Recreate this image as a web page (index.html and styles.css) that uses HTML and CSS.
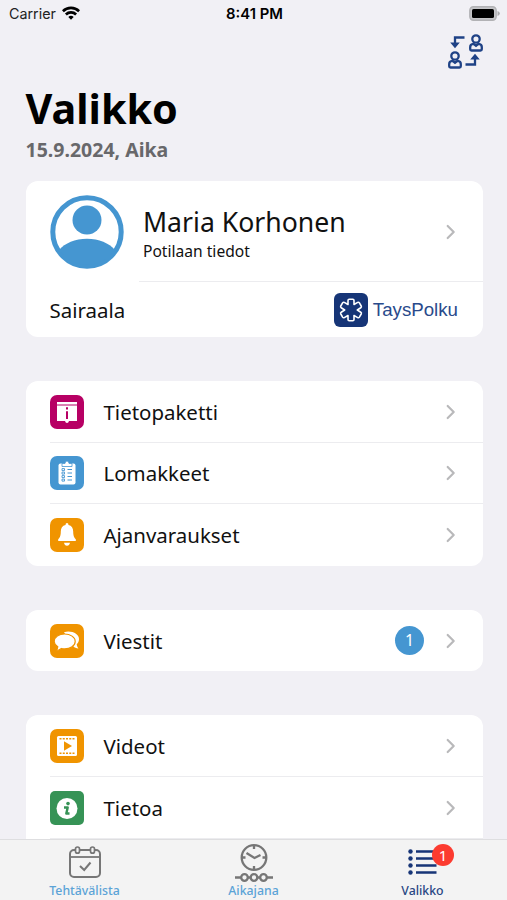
FILE: index.html
```html
<!DOCTYPE html>
<html lang="fi">
<head>
<meta charset="utf-8">
<meta name="viewport" content="width=device-width, initial-scale=1">
<title>Valikko</title>
<link rel="stylesheet" href="styles.css">
</head>
<body>
<svg class="defs" aria-hidden="true">
  <symbol id="chevron" viewBox="0 0 10 16"><path d="M1.700 2 7.700 8l-6 6" fill="none" stroke="#b9b9bb" stroke-width="2.200" stroke-linecap="round" stroke-linejoin="round"/></symbol>
  <symbol id="person" viewBox="0 0 14 18"><circle cx="7" cy="5" r="3.700"/><path d="M4.500 9.800C2 10 1.200 11.400 1.200 13v2.200q0 1.300 1.300 1.300h9q1.300 0 1.300-1.300V13c0-1.600-.8-3-3.300-3.200L7 11.800z"/></symbol>
</svg>
<div class="screen">
  <header class="status">
    <div class="carrier"><span>Carrier</span>
      <svg width="18" height="14" viewBox="0 0 18 14" fill="none" stroke="#000" stroke-width="2.700"><path d="M.9 5.200a11.600 11.600 0 0 1 16.200 0M3.900 8.500a7.300 7.300 0 0 1 10.200 0"/><path d="M9 13.800 6.300 11.100a3.900 3.900 0 0 1 5.400 0z" fill="#000" stroke="none"/></svg>
    </div>
    <div class="time">8:41 PM</div>
    <svg class="battery" width="31" height="15" viewBox="0 0 31 15"><rect x=".8" y=".8" width="26.400" height="13.400" rx="3.600" fill="#c5c5c8" stroke="#b2b2b5" stroke-width="1.400"/><path d="M28.500 5v5q2.300-.8 2.300-2.500T28.500 5z" fill="#aaaaad"/><rect x="3" y="3" width="22" height="9" rx="1.600" fill="#000"/></svg>
  </header>
  <div class="toolbar">
    <svg width="36" height="36" viewBox="0 0 36 36" fill="none" stroke="#1f4286" stroke-width="2.300">
      <use href="#person" x="21" y="0" width="14" height="18"/><use href="#person" x="0" y="17" width="14" height="18"/>
      <path d="M16.500 3.500H7V9M17.500 30.500H27V25"/><path d="M3.500 9 7 13.200 10.500 9zM23.500 25l3.500-4.200 3.500 4.200z" fill="#1f4286" stroke-width="1.200"/>
    </svg>
  </div>
  <main>
    <h1>Valikko</h1>
    <p class="date">15.9.2024, Aika</p>
    <section class="card profile">
      <div class="patient">
        <svg width="74" height="74" viewBox="0 0 74 74"><circle cx="37" cy="37" r="34.200" fill="#fff" stroke="#4596d1" stroke-width="5"/><circle cx="37" cy="25" r="14.500" fill="#4596d1"/><path d="M9 55C15 48 25 43.700 37 43.700S59 48 65 55A34 34 0 0 1 9 55z" fill="#4596d1"/></svg>
        <div class="who"><div class="name">Maria Korhonen</div><div class="sub">Potilaan tiedot</div></div>
        <svg class="chev"><use href="#chevron"/></svg>
      </div>
      <div class="hospital"><span class="label">Sairaala</span>
        <svg width="34" height="34" viewBox="0 0 34 34"><rect width="34" height="34" rx="6" fill="#163577"/><path transform="translate(17 17)" d="M-3-5.500V-9.500Q-3-10.700-1.800-10.700H1.800Q3-10.700 3-9.500V-5.500L6.700-7.600Q7.700-8.100 8.400-7.100L10.200-4Q10.800-2.900 9.800-2.200L6.300 0 9.800 2.200Q10.800 2.900 10.200 4L8.400 7.100Q7.700 8.100 6.700 7.600L3 5.500V9.500Q3 10.700 1.800 10.700H-1.800Q-3 10.700-3 9.500V5.500L-6.700 7.600Q-7.700 8.100-8.400 7.100L-10.200 4Q-10.800 2.900-9.800 2.200L-6.300 0-9.800-2.200Q-10.800-2.900-10.200-4L-8.400-7.100Q-7.700-8.100-6.700-7.600z" fill="none" stroke="#fff" stroke-width="1.600" stroke-linejoin="round"/></svg>
        <span class="brand">TaysPolku</span>
      </div>
    </section>
    <section class="card">
      <div class="row"><svg class="icon" viewBox="0 0 34 34"><rect width="34" height="34" rx="7" fill="#b70064"/><path d="M7 7h20v2.400H7zM7 10.400h20V26h-8q-.5 2-2 2t-2-2H7z" fill="#fff"/><path d="M17 12.300v2.200M17 16.300V24" stroke="#b70064" stroke-width="2"/></svg><span class="label">Tietopaketti</span><svg class="chev"><use href="#chevron"/></svg></div>
      <div class="row"><svg class="icon" viewBox="0 0 34 34"><rect width="34" height="34" rx="7" fill="#4596d1"/><rect x="8.500" y="7.500" width="17" height="21" rx="2" fill="#fff"/><path d="M12 10.500V7.500h3q0-2.500 2-2.500t2 2.500h3v3z" fill="#fff" stroke="#4596d1" stroke-width=".8"/><path d="M17.500 13.500H22M17.500 17H22M17.500 20.500H22M17.500 24H22" stroke="#4596d1" stroke-width="1.200"/><path d="M12 12.600h2.500v2H12zM12 16.100h2.500v2H12zM12 19.600h2.500v2H12zM12 23.100h2.500v2H12z" fill="none" stroke="#4596d1" stroke-width=".9"/></svg><span class="label">Lomakkeet</span><svg class="chev"><use href="#chevron"/></svg></div>
      <div class="row"><svg class="icon" viewBox="0 0 34 34"><rect width="34" height="34" rx="7" fill="#f09400"/><path d="M17 5q1.500 0 1.500 1.900c3.200.7 4.700 3.300 4.700 6.600 0 5 1.300 6.300 2.600 7.800V23H8.200v-1.700c1.300-1.500 2.600-2.800 2.600-7.800 0-3.300 1.500-5.900 4.700-6.600Q15.500 5 17 5zM14 24.700h6q-.6 3-3 3t-3-3z" fill="#fff"/></svg><span class="label">Ajanvaraukset</span><svg class="chev"><use href="#chevron"/></svg></div>
    </section>
    <section class="card">
      <div class="row"><svg class="icon" viewBox="0 0 34 34"><rect width="34" height="34" rx="7" fill="#f09400"/><path d="M14 8.200c7-2.400 15.500 1.600 15 7.300-.2 2-1 3.500-2.300 4.700.2 2 1 3.300 1.800 4.200-2.300 0-4-.8-5-1.900" fill="#fff"/><path d="M14.600 10c5.800 0 10.600 3.200 10.600 7.400s-4.800 7.500-10.600 7.500c-1.200 0-2.200-.1-3.200-.4-1.300 1-3 2-5.400 2 1-1 1.700-2.300 1.800-3.800-2-1.300-3.600-3.100-3.600-5.300C4.200 13.200 9 10 14.600 10z" fill="#fff" stroke="#f09400" stroke-width="1.200"/></svg><span class="label">Viestit</span><span class="count">1</span><svg class="chev"><use href="#chevron"/></svg></div>
    </section>
    <section class="card">
      <div class="row"><svg class="icon" viewBox="0 0 34 34"><rect width="34" height="34" rx="7" fill="#f09400"/><rect x="7" y="7" width="20" height="20" rx="1.500" fill="#fff"/><path d="M9.500 9.800h15M9.500 24.200h15" stroke="#f09400" stroke-width="1.600" stroke-dasharray="2 1.250"/><path d="m14 12.300 8 4.700-8 4.700z" fill="#f09400"/></svg><span class="label">Videot</span><svg class="chev"><use href="#chevron"/></svg></div>
      <div class="row"><svg class="icon" viewBox="0 0 34 34"><rect width="34" height="34" rx="5" fill="#369356"/><circle cx="17" cy="17.500" r="10.500" fill="#fff"/><circle cx="18" cy="12.600" r="1.800" fill="#369356"/><path d="M14 16.500h3.700l-1.400 6h3.200" fill="none" stroke="#369356" stroke-width="2.400" stroke-linejoin="round"/></svg><span class="label">Tietoa</span><svg class="chev"><use href="#chevron"/></svg></div>
      <div class="row"></div>
    </section>
  </main>
  <nav class="tabs">
    <div class="tab"><svg width="34" height="34" viewBox="0 0 34 34" fill="none" stroke="#767676" stroke-width="2"><rect x="2" y="5" width="30" height="27" rx="4"/><path d="M2 12h30" stroke-width="1.800"/><g fill="#f3f3f3" stroke-width="1.700"><rect x="7.500" y="2" width="4" height="6.200" rx="2"/><rect x="22.500" y="2" width="4" height="6.200" rx="2"/></g><path d="m12 21 4.200 4L22.500 17.500"/></svg><span>Tehtävälista</span></div>
    <div class="tab"><svg width="40" height="40" viewBox="0 0 40 40" fill="none" stroke="#767676" stroke-width="2.300"><circle cx="20" cy="15.500" r="12.300"/><path d="M20 3v4M20 24v4M7.500 15.500h4M28.500 15.500h4M12.500 11l8 5 6-3M1 35.500h6M14 35.500h2M24 35.500h2M33 35.500h6"/><circle cx="10.500" cy="35.500" r="3.300"/><circle cx="20" cy="35.500" r="3.300"/><circle cx="29.500" cy="35.500" r="3.300"/></svg><span>Aikajana</span></div>
    <div class="tab active"><svg width="30" height="28" viewBox="0 0 30 28" stroke="#173577" stroke-width="2.600" fill="#173577"><path d="M8 3.500h20.500M8 10.500h20.500M8 17.500h20.500M8 24.500h20.500"/><g stroke="none"><circle cx="2.500" cy="3.500" r="2.200"/><circle cx="2.500" cy="10.500" r="2.200"/><circle cx="2.500" cy="17.500" r="2.200"/><circle cx="2.500" cy="24.500" r="2.200"/></g></svg><b class="alert">1</b><span>Valikko</span></div>
  </nav>
</div>
</body>
</html>
```
FILE: styles.css
```css
* { box-sizing: border-box; }
body { margin: 0; background: #f1f0f5; color: #111; font-family: "Noto Sans", sans-serif; }
.defs { display: none; }
.screen { height: 900px; display: flex; flex-direction: column; overflow: hidden; }
.status { flex: none; height: 28px; padding: 0 7px 0 9px; display: grid; grid-template-columns: 1fr auto 1fr; align-items: center; font: 14.3px/28px Inter, sans-serif; color: #222; }
.carrier { display: flex; align-items: center; gap: 6px; }
.carrier svg { margin-top: -3px; }
.time { font-weight: 600; font-size: 14.800px; color: #000; }
.battery { justify-self: end; margin-top: -1px; }
.toolbar { flex: none; height: 53px; padding: 6px 23px 0 0; display: flex; justify-content: flex-end; align-items: flex-start; }
main { flex: 1; min-height: 0; overflow: hidden; padding: 0 24px 0 25.5px; }
h1 { margin: 0; height: 53px; font-size: 41.300px; line-height: 54px; font-weight: 700; color: #000; }
.date { margin: 0 0 15px; height: 32px; font-size: 19.500px; line-height: 31px; font-weight: 700; color: #68686b; }
.card { background: #fff; border-radius: 12px; margin-bottom: 44px; overflow: hidden; }
.patient { height: 100px; display: flex; align-items: center; padding: 1px 27px 0 24px; }
.who { margin-left: 19.5px; padding-top: 2px; flex: 1; }
.name { font-size: 26.600px; line-height: 36px; }
.sub { font-size: 15.600px; line-height: 22px; }
.hospital { height: 56px; margin-left: 24px; padding: 1px 25px 0 0; display: flex; align-items: center; background: linear-gradient(#ececef, #ececef) 89px 0 / 100% 1px no-repeat; }
.profile { height: 156px; }
.label { flex: 1; font-size: 20.450px; line-height: 28px; }
.brand { margin-left: 5px; font: 18.700px/24px "Liberation Sans", sans-serif; color: #294a8b; }
.chev { width: 10px; height: 16px; flex: none; }
.row { height: 61.600px; margin-left: 24px; padding: 1px 27px 0 0; display: flex; align-items: center; border-bottom: 1px solid #ececef; }
.row:last-child { border-bottom-color: transparent; }
.icon { width: 34px; height: 34px; margin-right: 20px; flex: none; }
.count { width: 29px; height: 29px; margin-right: 22px; border-radius: 50%; background: #4596d1; color: #fff; text-align: center; font-size: 16px; line-height: 29px; }
.tabs { flex: none; height: 61px; border-top: 1px solid #dedee0; background: #f3f3f3; display: grid; grid-template-columns: repeat(3, 1fr); }
.tab { position: relative; display: grid; grid-template-rows: 43px 16px; justify-items: center; align-items: center; font-size: 12.300px; line-height: 16px; font-weight: 550; color: #5ba3d7; }
.active { color: #294783; }
.alert { position: absolute; left: 94px; top: 4px; width: 22px; height: 22px; border-radius: 50%; background: #fc3b30; color: #fff; text-align: center; font: 15px/22px "Noto Sans", sans-serif; }
```
